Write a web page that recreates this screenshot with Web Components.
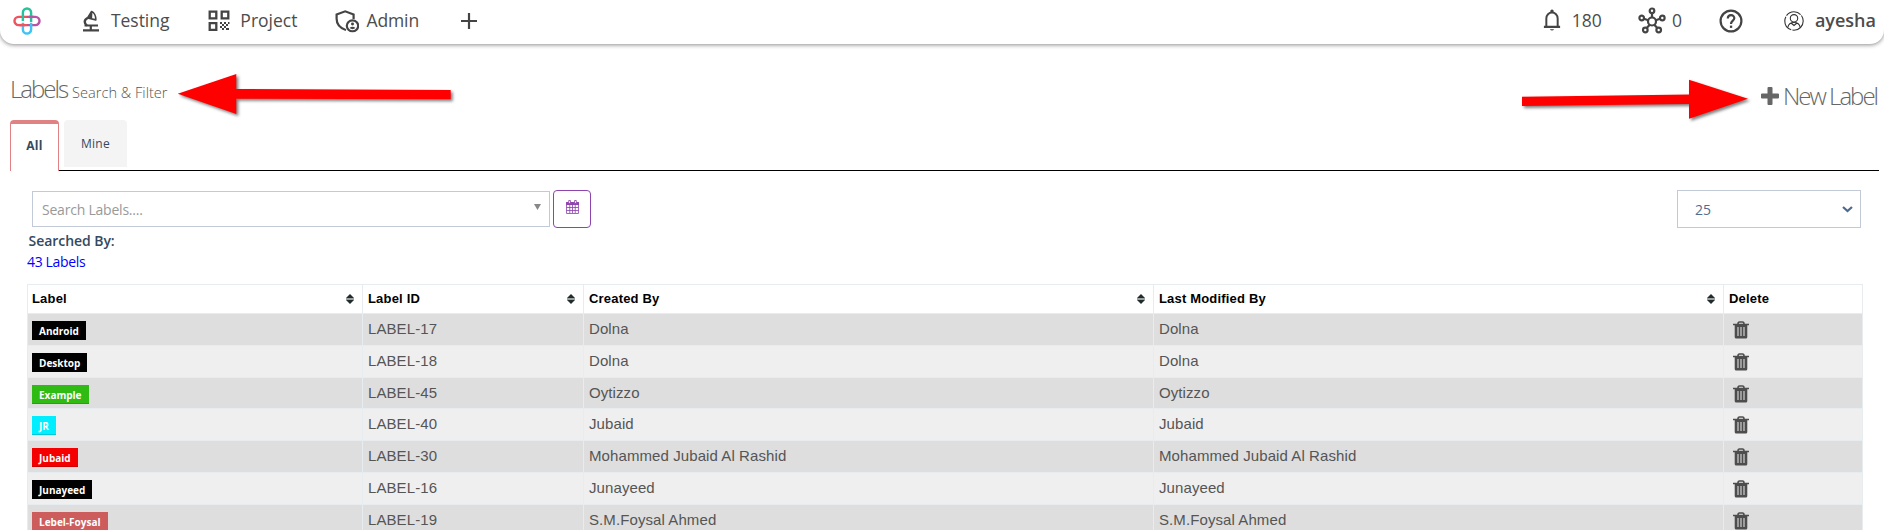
<!DOCTYPE html>
<html lang="en">
<head>
<meta charset="utf-8">
<title>Labels</title>
<style>
html,body{margin:0;height:530px;overflow:hidden;background:#fff;font-family:"Open Sans",sans-serif}
</style>
</head>
<body>
<labels-app></labels-app>
<script>
const icons = {
  logo: ['0 0 30 30', '<g fill="none" stroke-width="2.6"><path d="M15 10.600H6a4.400 4.400 0 0 0 0 8.800h9" stroke="#f0525e"/><path d="M15 10.600h9a4.400 4.400 0 0 1 0 8.800h-9" stroke="#b953a6"/><path d="M10.600 15V6a4.400 4.400 0 0 1 8.800 0v10" stroke="#27c29b"/><path d="M10.600 17V24a4.400 4.400 0 0 0 8.800 0v-7" stroke="#3fc3f7"/><path d="M7 19.400h6" stroke="#f0525e"/><path d="M17 10.600h5" stroke="#b953a6"/></g>'],
  testing: ['0 0 16 22', '<g fill="none" stroke="#444"><path d="M0 20.300h16M1.500 15.500H15M7.800 15.500v5" stroke-width="2.200"/><path d="M4.600 8C.8 10 1 13.500 4 15.500" stroke-width="2.400"/><path d="M8.600 1.500 4.600 8 12.800 9.800C13 6 11 2.500 8.600 1.500zM8.600 1.500 8.300 8.500M8.600 2 6.800 8" stroke-width="1.700" stroke-linejoin="round"/></g>'],
  project: ['0 0 22 22', '<g fill="none" stroke="#444" stroke-width="2.3"><path d="M1.700 1.700h6.600v6.600H1.700zM13.700 1.700h6.600v6.600h-6.600zM1.700 13.200h6.600v6.600H1.700z"/></g><path fill="#444" d="M12 12h2v2h-2zM16 12h2v2h-2zM14 14h2v2h-2zM18 14h2v2h-2zM12 16h2v2h-2zM16 16h2v2h-2zM14 18h2v2h-2zM18 18h3v2h-3zM20 12h1.500v2H20z"/>'],
  admin: ['0 0 24 24', '<g fill="none" stroke="#444" stroke-width="2.200"><path d="M11 21C4.500 18.500 1.600 15 1.600 9V4.600L10.200 1.400 18.600 4.600V9.500"/><circle cx="17.500" cy="16.500" r="5.700"/></g><circle cx="17.500" cy="14.600" r="1.500" fill="#444"/><path d="M14.500 18.800q3-2.400 6 0-3 2.400-6 0" fill="#444"/>'],
  plus: ['0 0 16 16', '<path d="M8 0v16M0 8h16" stroke="#444" stroke-width="2.200"/>'],
  bell: ['0 0 20 24', '<path d="M1 18.700h18M3.700 18V10a6.200 6.200 0 0 1 12.600 0v8" fill="none" stroke="#444" stroke-width="2.200"/><path d="M8.200 3.500V1.600q1.800-2 3.600 0v1.900zM7.500 21h5q-2.500 2.800-5 0" fill="#444"/>'],
  network: ['0 0 28 27', '<g fill="none" stroke="#444" stroke-width="2.200"><circle cx="14" cy="14.500" r="4"/><circle cx="14" cy="3.800" r="2.300"/><circle cx="3.700" cy="11" r="2.300"/><circle cx="24.300" cy="11" r="2.300"/><circle cx="7.300" cy="23" r="2.300"/><circle cx="20.700" cy="23" r="2.300"/><path d="M14 6v4.500M6 11.700l4.200 1.500M22 11.700l-4.200 1.500M8.700 21l3-3.300M19.300 21l-3-3.300"/></g>'],
  help: ['0 0 24 24', '<circle cx="12" cy="12" r="10.400" fill="none" stroke="#444" stroke-width="2.200"/><path d="M8.800 9.600C8.800 5 15.500 5.200 15.300 9.300 15.200 11.500 12 12 12 15" fill="none" stroke="#444" stroke-width="2.200"/><path d="M10.900 16.600h2.300v2.300h-2.300z" fill="#444"/>'],
  user: ['0 0 20 20', '<g fill="none" stroke="#333" stroke-width="1.100"><circle cx="10" cy="10" r="9.200" stroke-dasharray="16 1.200"/><circle cx="10" cy="7.300" r="3.700"/><path d="M3.800 16.500C4.500 12.500 7 11.500 10 11.500s5.500 1 6.200 5M7 12l3 2.500 3-2.500"/></g>'],
  bold: ['0 0 18 18', '<path d="M6.500 1q0-1 1-1h3q1 0 1 1v5.500H17q1 0 1 1v3q0 1-1 1h-5.500V17q0 1-1 1h-3q-1 0-1-1v-5.500H1q-1 0-1-1v-3q0-1 1-1h5.500z" fill="#666"/>'],
  calendar: ['0 0 12 14', '<path d="M.5 2.500h11v11H.5zM.5 7.500h11M.5 10.500h11M3.500 5v8M6 5v8M8.500 5v8" fill="none" stroke="#8e44ad" stroke-width=".8"/><path d="M.1 2.100h11.800V5H.1z" fill="#8e44ad"/><path d="M2.500.5h1.600v3H2.500zM7.900.5h1.600v3H7.900z" fill="#fff" stroke="#8e44ad" stroke-width=".8"/>'],
  chevron: ['0 0 11 7', '<path d="M1 1l4.500 4L10 1" fill="none" stroke="#4b6a8c" stroke-width="2.200"/>'],
  caret: ['0 0 8 7', '<path d="M0 0h8L4 7z" fill="#888"/>'],
  sort: ['0 0 8 10', '<path d="M4 0 8 4H0zM0 6h8L4 10z" fill="#222b2b"/><path d="M0 4h8v2H0z" fill="#9a9f9f"/>'],
  trash: ['0 0 16 18', '<path d="M0 3.500h16M5 3Q5 1 6.500 1h3Q11 1 11 3" fill="none" stroke="#4d4d4d" stroke-width="1.600"/><path d="M1.700 4h12.600v12q0 1.500-1.500 1.500H3.200q-1.500 0-1.500-1.500z" fill="#4d4d4d"/><path d="M5 6v9M8 6v9M11 6v9" stroke="#ddd" stroke-width="1.100"/>']
};
function define(name, css, html) {
  customElements.define(name, class extends HTMLElement {
    connectedCallback() {
      if (this.shadowRoot) return;
      this.attachShadow({mode: 'open'}).innerHTML =
        '<style>*{box-sizing:border-box}' + css + '</style>' + (typeof html === 'function' ? html(this) : html);
    }
  });
}
define('ui-icon', ':host{display:block;flex:none}svg{display:block;width:100%;height:100%}', el => {
  const [box, body] = icons[el.getAttribute('name')];
  return `<svg viewBox="${box}" preserveAspectRatio="none">${body}</svg>`;
});
define('nav-item', ':host{display:flex;align-items:center;font-size:17.5px;color:#4c4c4c;white-space:nowrap;line-height:24px;padding-bottom:2px}::slotted(ui-icon){margin-top:2px}', '<slot></slot>');
define('app-nav', `:host{display:flex;align-items:center;height:44px;box-sizing:border-box;padding:0 8px 3px 13px;background:#fff;border-radius:0 0 14px 14px;box-shadow:0 1px 4px rgba(0,0,0,.45)}
  .space{flex:1}`, `
  <ui-icon name="logo" style="width:28px;height:28px;margin-top:1px"></ui-icon>
  <nav-item style="margin-left:42px;letter-spacing:-.05px"><ui-icon name="testing" style="width:16px;height:22px;margin-right:12px"></ui-icon>Testing</nav-item>
  <nav-item style="margin-left:39px"><ui-icon name="project" style="width:22px;height:22px;margin-right:10px"></ui-icon>Project</nav-item>
  <nav-item style="margin-left:38px;letter-spacing:-.1px"><ui-icon name="admin" style="width:24px;height:23px;margin-right:7px;margin-top:4px"></ui-icon>Admin</nav-item>
  <nav-item style="margin-left:42px"><ui-icon name="plus" style="width:16px;height:16px"></ui-icon></nav-item>
  <div class="space"></div>
  <nav-item><ui-icon name="bell" style="width:18px;height:23px;margin-right:11px"></ui-icon>180</nav-item>
  <nav-item style="margin-left:36px"><ui-icon name="network" style="width:28px;height:27px;margin-right:6px"></ui-icon>0</nav-item>
  <nav-item style="margin-left:37px"><ui-icon name="help" style="width:24px;height:24px"></ui-icon></nav-item>
  <nav-item style="margin-left:41px;font-weight:600;font-size:18px"><ui-icon name="user" style="width:20px;height:20px;margin-right:11px"></ui-icon>ayesha</nav-item>`);
define('page-title', `:host{display:flex;justify-content:space-between;height:76px;box-sizing:border-box;padding:29px 7px 0 10px;color:#666;font-weight:300;font-size:24px;letter-spacing:-2px;line-height:32px;white-space:nowrap}
  small{font-size:14.6px;letter-spacing:0;color:#555;margin-left:5px}.new{display:flex;padding-top:7px}ui-icon{width:18px;height:18px;margin:7px 4px 0 0}`, `
  <div>Labels<small>Search &amp; Filter</small></div><div class="new"><ui-icon name="bold"></ui-icon>New Label</div>`);
define('tab-bar', `:host{display:flex;align-items:flex-start;height:51px;margin:0 5px 0 10px;font-size:12px;letter-spacing:.3px;color:#34495e;position:relative;line-height:18px}
  .on{width:49px;height:51px;border:1px solid #e08283;border-top-width:4px;border-bottom:0;border-radius:4px 4px 0 0;padding-top:13px;text-align:center;font-weight:700;font-size:12px}
  .off{width:63px;height:47px;margin-left:5px;background:#f4f4f4;border-radius:4px 4px 0 0;text-align:center;padding-top:15px;font-weight:500}
  .line{position:absolute;left:49px;right:0;bottom:0;height:1px;background:#000}`, '<div class="on">All</div><div class="off">Mine</div><div class="line"></div>');
define('search-bar', `:host{display:flex;height:38px;margin:19px 23px 0 32px;font-size:14px}
  .box{width:518px;height:36px;margin-top:1px;border:1px solid #c2cad8;display:flex;align-items:center;justify-content:space-between;padding:0 8px 0 9px;color:#999}.ph{letter-spacing:-.22px}
  .cal{width:38px;height:38px;border:1px solid #8e44ad;border-radius:4px;margin-left:3px;padding:9px 0 0 12px}
  .sel{margin-left:auto;width:184px;height:38px;border:1px solid #c2cad8;display:flex;align-items:center;justify-content:space-between;padding:0 7px 0 17px;color:#556b8d}`, `
  <div class="box"><span class="ph">Search Labels....</span><ui-icon name="caret" style="width:7px;height:6px;margin-top:-4px"></ui-icon></div>
  <div class="cal"><ui-icon name="calendar" style="width:13px;height:14px"></ui-icon></div>
  <div class="sel"><span>25</span><ui-icon name="chevron" style="width:11px;height:7px"></ui-icon></div>`);
define('search-summary', `:host{display:block;height:56px;padding:3px 0 0 27px;box-sizing:border-box;font-size:14px;line-height:20px}b{display:block;padding-left:1.5px;color:#34495e;font-weight:600;letter-spacing:-.05px}a{display:block;color:#00f;margin-top:1px;letter-spacing:-.35px}`,
  '<b>Searched By:</b><a>43 Labels</a>');
define('label-badge', `:host{display:block;height:19px;padding:0 7px;font-size:10px;line-height:20px;font-weight:700;color:#fff;background:var(--c);box-shadow:inset 0 -1px 0 rgba(0,0,0,.15);white-space:nowrap}`, '<slot></slot>');
const rows = [
  ['Android','#000',17,'Dolna'],['Desktop','#000',18,'Dolna'],['Example','#2fba14',45,'Oytizzo'],['JR','#00eeff',40,'Jubaid'],
  ['Jubaid','#f50000',30,'Mohammed Jubaid Al Rashid'],['Junayeed','#000',16,'Junayeed'],['Lebel-Foysal','#cd5c5c',19,'S.M.Foysal Ahmed']];
define('label-table', `:host{display:block;margin:0 21px 0 27px;font-family:"Liberation Sans",Arial,sans-serif;border:1px solid #e7ecf1;border-right:0}
  .r{display:grid;grid-template-columns:335px 221px 570px 570px 139px;height:31.75px;font-size:15px;letter-spacing:.09px;color:#555;line-height:18px}
  .h{height:29px;font-size:13px;letter-spacing:.18px;font-weight:700;color:#000}
  .r>div{border-right:1px solid #e7ecf1;border-bottom:1px solid #e7ecf1;padding:6px 8px 0 5px;display:flex;align-items:flex-start}
  .r>div:first-child{padding-left:4px}
  .r.h>div{justify-content:space-between;padding-top:5px}.h ui-icon{width:8px;height:10px;margin-top:4px}
  .odd{background:#dedede}.even{background:#efefef}label-badge{margin-top:1px;letter-spacing:0;font-family:"Open Sans",sans-serif}.t{width:16px;height:18px;margin:1px 0 0 4px}`, () => {
  const s = '<ui-icon name="sort"></ui-icon>';
  return `<div class="r h"><div>Label${s}</div><div>Label ID${s}</div><div>Created By${s}</div><div>Last Modified By${s}</div><div>Delete</div></div>` +
    rows.map(([n, c, id, who], i) => `<div class="r ${i % 2 ? 'even' : 'odd'}"><div><label-badge style="--c:${c}">${n}</label-badge></div><div>LABEL-${id}</div><div>${who}</div><div>${who}</div><div><ui-icon class="t" name="trash"></ui-icon></div></div>`).join('');
});
define('red-arrows', `:host{position:absolute;left:0;top:0;width:1884px;height:140px;pointer-events:none}svg{display:block;filter:drop-shadow(2px 2px 1.5px rgba(0,0,0,.5))}`,
  '<svg width="1884" height="140" fill="#f00"><path d="M177.700 93.700 236.300 74V89L450.700 90V99.300L236.300 98.700V114z"/><path d="M1748 98.700 1689 79.700V94.500L1522 96.700V106L1689 104V118.700z"/></svg>');
define('labels-app', ':host{display:block;position:relative;width:1884px;height:530px;overflow:hidden}',
  '<app-nav></app-nav><page-title></page-title><tab-bar></tab-bar><search-bar></search-bar><search-summary></search-summary><label-table></label-table><red-arrows></red-arrows>');
</script>
</body>
</html>
